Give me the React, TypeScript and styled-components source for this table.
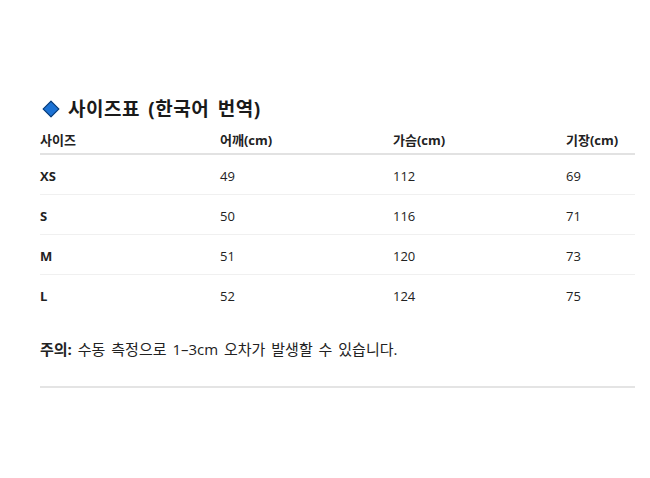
import React from 'react';
import styled, { createGlobalStyle } from 'styled-components';

const GlobalStyle = createGlobalStyle`
  html, body {
    margin: 0;
    padding: 0;
    background: #ffffff;
  }
  body {
    font-family: "Open Sans", "Noto Sans CJK KR", sans-serif;
    color: #222222;
  }
`;

const Page = styled.div`
  padding: 95px 15px 0 40px;
`;

const Title = styled.h2`
  display: flex;
  align-items: center;
  gap: 9px;
  margin: 0 0 11px;
  font-size: 19px;
  font-weight: 700;
  line-height: 28px;
  word-spacing: 3px;
  letter-spacing: 0.5px;
  color: #1a1a1a;
`;

const Diamond = styled.span`
  display: inline-block;
  flex: none;
  width: 10px;
  height: 10px;
  margin: 0 2px 0 5px;
  background: #1c72d4;
  border: 1px solid #0b3a70;
  transform: rotate(45deg);
`;

const Table = styled.div`
  display: grid;
  grid-template-columns: 180px 173px 173px 1fr;
`;

const Row = styled.div<{ $head?: boolean; $last?: boolean }>`
  display: contents;

  & > div {
    font-size: 13px;
    border-bottom: ${(p) =>
      p.$head ? '2px solid #e2e2e2' : p.$last ? 'none' : '1px solid #f0f0f0'};
    height: ${(p) => (p.$head ? '19px' : '36px')};
    padding-top: ${(p) => (p.$head ? '0' : '3px')};
    line-height: ${(p) => (p.$head ? '12px' : '36px')};
  }
`;

const Cell = styled.div<{ $bold?: boolean }>`
  font-weight: ${(p) => (p.$bold ? 700 : 400)};
  color: #222222;
`;

const Note = styled.p`
  margin: 25px 0 0;
  font-size: 15px;
  line-height: 20px;
  word-spacing: 2px;
  color: #222222;

  strong {
    font-weight: 700;
  }
`;

const Divider = styled.hr`
  margin: 27px 0 0;
  border: none;
  border-top: 2px solid #e4e4e4;
`;

const sizes = [
  { size: 'XS', shoulder: 49, chest: 112, length: 69 },
  { size: 'S', shoulder: 50, chest: 116, length: 71 },
  { size: 'M', shoulder: 51, chest: 120, length: 73 },
  { size: 'L', shoulder: 52, chest: 124, length: 75 },
];

const App: React.FC = () => {
  return (
    <>
      <GlobalStyle />
      <Page>
        <Title>
          <Diamond />
          사이즈표 (한국어 번역)
        </Title>
        <Table>
          <Row $head>
            <Cell $bold>사이즈</Cell>
            <Cell $bold>어깨(cm)</Cell>
            <Cell $bold>가슴(cm)</Cell>
            <Cell $bold>기장(cm)</Cell>
          </Row>
          {sizes.map((s, i) => (
            <Row key={s.size} $last={i === sizes.length - 1}>
              <Cell $bold>{s.size}</Cell>
              <Cell>{s.shoulder}</Cell>
              <Cell>{s.chest}</Cell>
              <Cell>{s.length}</Cell>
            </Row>
          ))}
        </Table>
        <Note>
          <strong>주의:</strong> 수동 측정으로 1–3cm 오차가 발생할 수 있습니다.
        </Note>
        <Divider />
      </Page>
    </>
  );
};

export default App;
